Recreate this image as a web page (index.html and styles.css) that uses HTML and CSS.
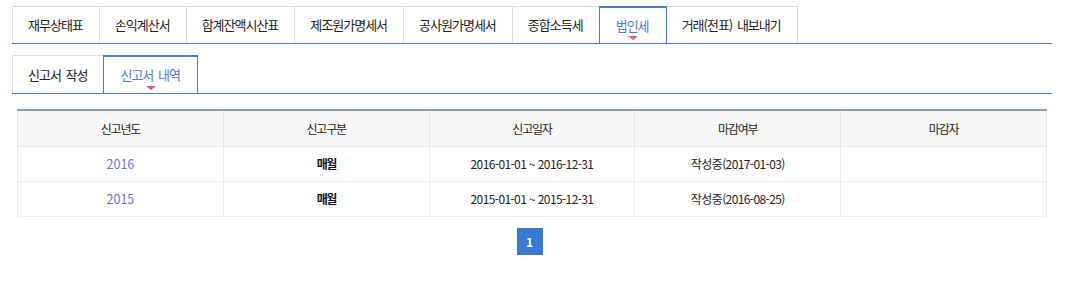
FILE: index.html
```html
<!DOCTYPE html>
<html lang="ko">
<head>
<meta charset="utf-8">
<title>법인세 - 신고서 내역</title>
<link rel="stylesheet" href="styles.css">
</head>
<body>
<div class="page">
  <ul class="tabs main-tabs">
    <li class="tab">재무상태표</li>
    <li class="tab">손익계산서</li>
    <li class="tab">합계잔액시산표</li>
    <li class="tab">제조원가명세서</li>
    <li class="tab">공사원가명세서</li>
    <li class="tab">종합소득세</li>
    <li class="tab active">법인세</li>
    <li class="tab">거래(전표) 내보내기</li>
  </ul>
  <ul class="tabs sub-tabs">
    <li class="tab">신고서 작성</li>
    <li class="tab active">신고서 내역</li>
  </ul>
  <table class="grid">
    <thead>
      <tr><th>신고년도</th><th>신고구분</th><th>신고일자</th><th>마감여부</th><th>마감자</th></tr>
    </thead>
    <tbody>
      <tr><td class="year">2016</td><td class="kind">매월</td><td>2016-01-01 ~ 2016-12-31</td><td>작성중(2017-01-03)</td><td></td></tr>
      <tr><td class="year">2015</td><td class="kind">매월</td><td>2015-01-01 ~ 2015-12-31</td><td>작성중(2016-08-25)</td><td></td></tr>
    </tbody>
  </table>
  <div class="pager"><span class="page-num current">1</span></div>
</div>
</body>
</html>
```

FILE: styles.css
```css
* { box-sizing: border-box; }
body {
  margin: 0;
  font-family: "Noto Sans CJK KR", "Noto Sans", sans-serif;
  font-size: 12px;
  color: #333;
  background: #fff;
}
.page {
  width: 1052px;
  padding: 6px 0 0 12px;
}
.tabs {
  list-style: none;
  margin: 0;
  padding: 0;
  display: flex;
  border-bottom: 1px solid #4a7bd6;
}
.tab {
  position: relative;
  border: 1px solid #dcdcdc;
  border-bottom: 0;
  margin-right: -1px;
  text-align: center;
  font-size: 13px;
  color: #222;
  letter-spacing: -1px;
  word-spacing: 2px;
  white-space: nowrap;
}
.main-tabs .tab {
  height: 37px;
  line-height: 36px;
  padding: 0 16px 0 15px;
  min-width: 68px;
}
.sub-tabs {
  margin-top: 11px;
}
.sub-tabs .tab {
  height: 38px;
  line-height: 37px;
  padding: 0 16px 0 15px;
}
.sub-tabs .tab.active { padding: 0 17px 0 16px; }
.tab.active {
  z-index: 1;
  color: #4a78d8;
  border-color: #4a7bd6;
  border-top-width: 2px;
  line-height: 35px;
}
.sub-tabs .tab.active { line-height: 36px; }
.tab.active::after {
  content: "";
  position: absolute;
  left: 50%;
  bottom: 3px;
  margin-left: -5px;
  border-left: 5px solid transparent;
  border-right: 5px solid transparent;
  border-top: 4px solid #ef5a62;
}
.grid {
  margin: 15px 0 0 5px;
  width: 1030px;
  border-collapse: collapse;
  table-layout: fixed;
}
.grid th {
  height: 36px;
  background: #f7f7f7;
  font-weight: normal;
  color: #222;
  border-top: 2px solid #8c99b0;
  border-left: 1px solid #e6e6e6;
  border-right: 1px solid #e6e6e6;
  border-bottom: 1px solid #e6e6e6;
  letter-spacing: -1.2px;
}
.grid td {
  height: 35px;
  text-align: center;
  color: #222;
  border: 1px solid #ececec;
  letter-spacing: -0.6px;
}
.grid td.year { color: #6f6ee6; letter-spacing: 0; font-size: 12.5px; }
.grid td.kind { color: #111; font-weight: bold; letter-spacing: -1.5px; }
.pager {
  width: 1035px;
  margin-top: 11px;
  display: flex;
  justify-content: center;
}
.page-num {
  display: inline-block;
  width: 26px;
  height: 27px;
  line-height: 27px;
  text-align: center;
  font-weight: bold;
}
.page-num.current {
  background: #3b78d4;
  color: #fff;
}
```
